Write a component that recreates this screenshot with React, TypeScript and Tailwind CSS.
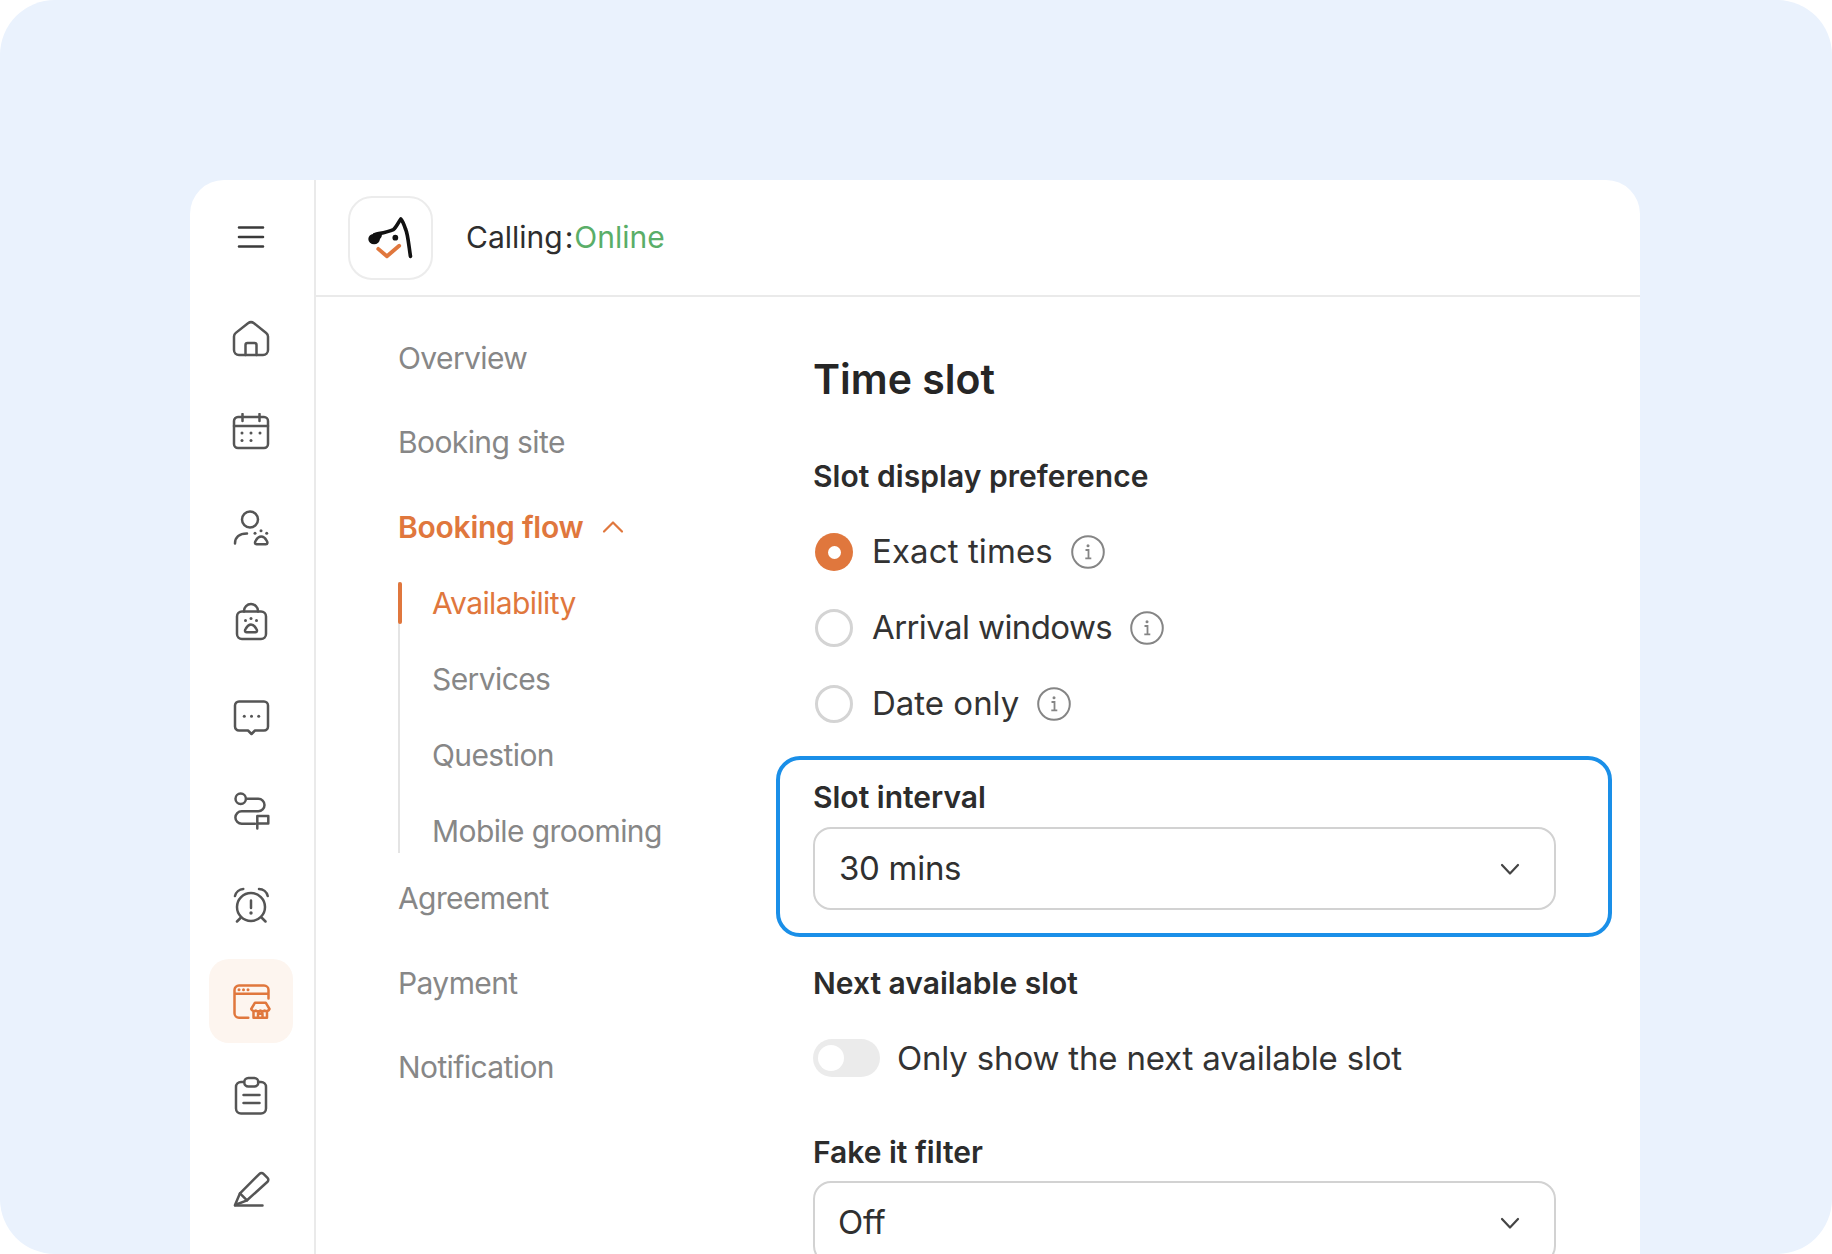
import React from "react";

const G = "#555555";
const O = "#E0773D";

function Ico({ color = G, children }: { color?: string; children: React.ReactNode }) {
  return (
    <svg width="40" height="40" viewBox="0 0 40 40" fill="none" stroke={color} strokeWidth="2.500" strokeLinecap="round" strokeLinejoin="round">
      {children}
    </svg>
  );
}

const Dot = ({ x, y, r = 1.500, c = G }: { x: number; y: number; r?: number; c?: string }) => (
  <circle cx={x} cy={y} r={r} fill={c} stroke="none" />
);

const icons: { key: string; active?: boolean; el: React.ReactNode }[] = [
  {
    key: "home",
    el: (
      <Ico>
        <path d="M3 17.500c0-1.500.7-2.700 1.800-3.600L17 4.200q3-2.200 6 0l12.200 9.700c1.100.9 1.800 2.100 1.800 3.600V31a5 5 0 0 1-5 5H8a5 5 0 0 1-5-5Z" />
        <path d="M14.500 36V26a2 2 0 0 1 2-2h7a2 2 0 0 1 2 2v10" />
      </Ico>
    ),
  },
  {
    key: "calendar",
    el: (
      <Ico>
        <rect x="3" y="4" width="34" height="31" rx="4" />
        <path d="M3 13h34M11.500 1v7M28.500 1v7" />
        <Dot x={11} y={20} /><Dot x={20} y={20} /><Dot x={29} y={20} /><Dot x={11} y={27.500} /><Dot x={20} y={27.500} />
      </Ico>
    ),
  },
  {
    key: "client",
    el: (
      <Ico>
        <circle cx="19" cy="11.500" r="8" />
        <path d="M4 35.500c0-6 4-10 12-10" />
        <path d="M25.500 36.200c-1.800 0-2-2-.6-3.800 1.300-2.400 2.900-3.900 5.300-3.900s4 1.500 5.300 3.900c1.400 1.800 1.200 3.800-.6 3.800Z" />
        <Dot x={24} y={25.200} /><Dot x={30} y={22.800} /><Dot x={35.700} y={25.200} />
      </Ico>
    ),
  },
  {
    key: "bag",
    el: (
      <Ico>
        <rect x="6" y="9.500" width="29" height="27.500" rx="5" />
        <path d="M13 9.500V9a7 7 0 0 1 14 0v.5" />
        <path d="M15.500 30.200c-1.700 0-2-1.900-.7-3.500 1.300-2.500 3-4.200 5.200-4.200s3.900 1.700 5.200 4.200c1.300 1.600 1 3.500-.7 3.500Z" />
        <Dot x={14.500} y={18.500} /><Dot x={20} y={16.500} /><Dot x={25.500} y={18.500} />
      </Ico>
    ),
  },
  {
    key: "chat",
    el: (
      <Ico>
        <path d="M8 4.500h25a4 4 0 0 1 4 4v21a4 4 0 0 1-4 4h-9L20.500 37 17 33.500H8a4 4 0 0 1-4-4v-21a4 4 0 0 1 4-4Z" />
        <Dot x={13.300} y={19.200} /><Dot x={20.500} y={19.200} /><Dot x={27.700} y={19.200} />
      </Ico>
    ),
  },
  {
    key: "route",
    el: (
      <Ico>
        <circle cx="9.700" cy="7.800" r="5.200" />
        <path d="M15.700 7.800h11.600a6.200 6.200 0 0 1 0 12.400H10.700a6.300 6.300 0 0 0 0 12.600H24" />
        <path d="M26.300 37.500V25h11v7.500h-11" />
      </Ico>
    ),
  },
  {
    key: "alarm",
    el: (
      <Ico>
        <circle cx="20" cy="21" r="14" />
        <path d="M4 10a9 9 0 0 1 8.300-7M28 3a9 9 0 0 1 8.700 7M6 35.500 9.500 32M34.500 35.500 31 32M20 14.500V22" />
        <Dot x={20} y={27} r={1.700} />
      </Ico>
    ),
  },
  {
    key: "site",
    active: true,
    el: (
      <Ico color={O}>
        <path d="M17.300 36.700H8a4.500 4.500 0 0 1-4.500-4.500V9a4.500 4.500 0 0 1 4.500-4.500h25A4.500 4.500 0 0 1 37.500 9v8.500M3.500 12.700h34" />
        <Dot x={8} y={8.700} c={O} /><Dot x={12.500} y={8.700} c={O} /><Dot x={17} y={8.700} c={O} />
        <path d="M24 21.700h10.700l3.800 6.300a3.200 3.200 0 0 1-4.800 1.600 4 4 0 0 1-4.400 0 4 4 0 0 1-4.500 0 3.200 3.200 0 0 1-4.600-1.600ZM22.500 30v6.700h13.500V30M27 36.700v-4h4.500v4" />
      </Ico>
    ),
  },
  {
    key: "clipboard",
    el: (
      <Ico>
        <path d="M13 7h-3a5 5 0 0 0-5 5v21.500a5 5 0 0 0 5 5h20a5 5 0 0 0 5-5V12a5 5 0 0 0-5-5h-3" />
        <rect x="13.300" y="3" width="14" height="8.500" rx="4" />
        <path d="M12.500 20h16M12.500 28h16" />
      </Ico>
    ),
  },
  {
    key: "pen",
    el: (
      <Ico>
        <path d="M4 35 9 23.300 28.500 3.800a2.800 2.800 0 0 1 4 0l4 4a2.800 2.800 0 0 1 0 4L16 30.300Z" />
        <path d="M9 23.300 16 30.300M4 35.500h27.500" />
      </Ico>
    ),
  },
];

function Chevron({ up = false, color = "#444" }: { up?: boolean; color?: string }) {
  return (
    <svg width="22" height="14" viewBox="0 0 22 14" fill="none" stroke={color} strokeWidth="2.200" strokeLinecap="round" strokeLinejoin="round">
      <path d={up ? "M2 11.500 11 2.500 20 11.500" : "M3 3l8 8.500L19 3"} />
    </svg>
  );
}

function Info() {
  return (
    <svg width="34" height="34" viewBox="0 0 34 34" fill="none">
      <circle cx="17" cy="17" r="15.800" stroke="#858585" strokeWidth="2" />
      <circle cx="17" cy="10.800" r="1.500" fill="#858585" />
      <path d="M14.500 15h3v8M14.300 23.300h6" stroke="#858585" strokeWidth="1.800" />
    </svg>
  );
}

function Select({ value, textClass }: { value: string; textClass: string }) {
  return (
    <div className={`flex h-[83px] items-center justify-between rounded-[18px] border-2 border-[#d2d2d2] bg-white pr-[33px] ${textClass}`}>
      <span className="text-[33px] leading-none tracking-[-0.3px] text-[#303030]">{value}</span>
      <Chevron />
    </div>
  );
}

function Radio({ label, checked, tracking }: { label: string; checked?: boolean; tracking: string }) {
  return (
    <div className="flex h-[76px] items-center">
      {checked ? (
        <span className="ml-[2px] flex h-[38px] w-[38px] items-center justify-center rounded-full bg-[#E0773D]">
          <span className="h-[13px] w-[13px] rounded-full bg-white" />
        </span>
      ) : (
        <span className="ml-[2px] h-[38px] w-[38px] rounded-full border-[3px] border-[#d4d4d4] bg-white" />
      )}
      <span className={`ml-[19px] text-[33px] text-[#333333] ${tracking}`}>{label}</span>
      <span className="ml-[18px] flex"><Info /></span>
    </div>
  );
}

const Nav = ({ label }: { label: string }) => (
  <div className="flex h-[84.500px] items-center text-[30px] tracking-[-0.6px] text-[#878787]">{label}</div>
);

const Sub = ({ label, active }: { label: string; active?: boolean }) => (
  <div className={`flex h-[76px] items-center pl-[34px] text-[30px] tracking-[-0.6px] ${active ? "text-[#E0773D]" : "text-[#878787]"}`}>{label}</div>
);

export default function App() {
  return (
    <div className="h-[1254px] w-[1832px] overflow-hidden bg-white" style={{ fontFamily: "Inter, 'Noto Sans', sans-serif" }}>
      <div className="h-full overflow-hidden rounded-[55px] bg-[#EAF2FD] pl-[190px] pt-[180px]">
        <div className="flex h-[1110px] w-[1450px] overflow-hidden rounded-[34px] bg-white">
          <aside className="flex w-[126px] shrink-0 flex-col items-center border-r-2 border-[#eaeaea] pr-[3px]">
            <div className="flex h-[116.500px] shrink-0 items-center justify-center">
              <svg width="28" height="24" viewBox="0 0 28 24" fill="none" stroke="#3a3a3a" strokeWidth="2.600" strokeLinecap="round">
                <path d="M2 1.500h24M2 11h24M2 20.500h24" />
              </svg>
            </div>
            <div className="flex flex-col items-center gap-[10.600px]">
              {icons.map((ic) => (
                <div
                  key={ic.key}
                  className={`flex h-[84px] w-[84px] shrink-0 items-center justify-center rounded-[20px] ${ic.active ? "bg-[#FDF5EF]" : ""}`}
                >
                  {ic.el}
                </div>
              ))}
            </div>
          </aside>

          <div className="flex min-w-0 flex-1 flex-col">
            <header className="flex h-[117px] shrink-0 items-center border-b-2 border-[#eaeaea] pl-[32px]">
              <div className="flex h-[84px] w-[85px] items-center justify-center rounded-[24px] border-2 border-[#ececec] bg-white">
                <svg width="84" height="84" viewBox="0 0 84 84" fill="none" strokeLinecap="round" strokeLinejoin="round">
                  <path d="M62.700 61C61 50 60 38 57.700 33 56 28 54.500 24 52.700 22.300 50 26 48 31 45 33.300 39 36 32 37 26 38.300" stroke="#111" strokeWidth="3.800" />
                  <ellipse cx="25" cy="43" rx="6" ry="5.500" fill="#111" />
                  <path d="M24 37c5 0 9 0 9 2.500s-4 6-8 7" fill="#111" />
                  <circle cx="47" cy="41.700" r="3" fill="#111" />
                  <path d="M29.300 53.300 38.300 61 51 50" stroke="#E0773D" strokeWidth="4" />
                </svg>
              </div>
              <div className="ml-[33px] text-[30px] text-[#2e2e2e]">
                Calling<span className="ml-[2px] mr-[1px]">:</span><span className="text-[#5AAE68]">Online</span>
              </div>
            </header>

            <div className="flex min-h-0 flex-1">
              <nav className="w-[497px] shrink-0 pl-[82px] pt-[19px]">
                <Nav label="Overview" />
                <Nav label="Booking site" />
                <div className="flex h-[84.500px] items-center gap-[19px] text-[30px] font-semibold tracking-[-0.25px] text-[#E0773D]">
                  Booking flow
                  <Chevron up color="#E0773D" />
                </div>
                <div className="relative -mb-[13px] -mt-[4px]">
                  <span className="absolute bottom-[17px] left-0 top-[16px] w-[2px] bg-[#e4e4e4]" />
                  <span className="absolute left-0 top-[16px] h-[42px] w-[4px] rounded-full bg-[#E0773D]" />
                  <Sub label="Availability" active />
                  <Sub label="Services" />
                  <Sub label="Question" />
                  <Sub label="Mobile grooming" />
                </div>
                <Nav label="Agreement" />
                <Nav label="Payment" />
                <Nav label="Notification" />
              </nav>

              <main className="w-[743px] shrink-0">
                <h1 className="mt-[59px] flex h-[48px] items-center text-[41px] font-semibold text-[#262626]">Time slot</h1>
                <h2 className="mt-[54px] flex h-[36px] items-center text-[30px] font-semibold tracking-[0.05px] text-[#2c2c2c]">Slot display preference</h2>
                <div className="mt-[20px]">
                  <Radio label="Exact times" checked tracking="tracking-[0.1px]" />
                  <Radio label="Arrival windows" tracking="tracking-[-0.6px]" />
                  <Radio label="Date only" tracking="tracking-[0px]" />
                </div>
                <div className="-ml-[37px] -mr-[56px] mt-[14px] rounded-[24px] border-4 border-[#1A8FE8] pb-[23px] pl-[33px] pr-[52px] pt-[19px]">
                  <div className="flex h-[36px] items-center text-[30px] font-semibold text-[#2c2c2c]">Slot interval</div>
                  <div className="mt-[12px]">
                    <Select value="30 mins" textClass="pl-[24px]" />
                  </div>
                </div>
                <div className="mt-[28px] flex h-[36px] items-center text-[30px] font-semibold text-[#2c2c2c]">Next available slot</div>
                <div className="mt-[37px] flex h-[40px] items-center">
                  <span className="flex h-[38px] w-[67px] items-center rounded-full bg-[#ebebeb] pl-[5px]">
                    <span className="h-[26px] w-[26px] rounded-full bg-white" />
                  </span>
                  <span className="ml-[17px] pt-[1px] text-[33px] tracking-[-0.18px] text-[#333333]">Only show the next available slot</span>
                </div>
                <div className="mt-[56px] flex h-[36px] items-center text-[30px] font-semibold text-[#2c2c2c]">Fake it filter</div>
                <div className="mt-[11px]">
                  <Select value="Off" textClass="pl-[23px]" />
                </div>
              </main>
            </div>
          </div>
        </div>
      </div>
    </div>
  );
}
